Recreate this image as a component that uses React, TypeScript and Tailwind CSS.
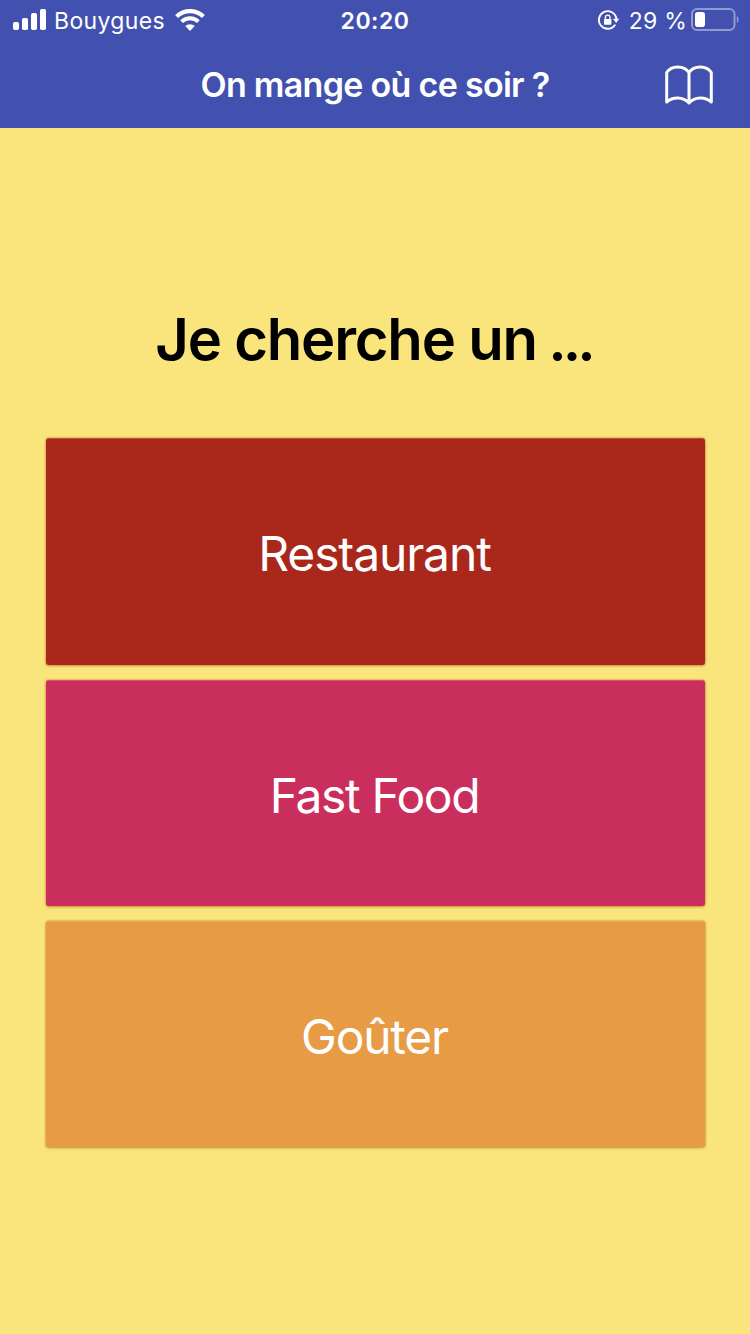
const CHOICES = [
  { id: "restaurant", label: "Restaurant", style: "bg-[#a9271b] tracking-[-1.15px]" },
  { id: "fast-food", label: "Fast Food", style: "bg-[#ca2e5d] tracking-[-1.4px]" },
  { id: "gouter", label: "Goûter", style: "bg-[#e89b45] tracking-[-1.25px]" },
];

const SignalIcon = () => (
  <svg className="mb-[2px] ml-[13px]" width="33" height="21" viewBox="0 0 33 21" fill="#fff">
    <rect x="0" y="13" width="6" height="8" rx="1.8" />
    <rect x="9" y="9" width="6" height="12" rx="1.8" />
    <rect x="18" y="4" width="6" height="17" rx="1.8" />
    <rect x="27" y="0" width="6" height="21" rx="1.8" />
  </svg>
);

const WifiIcon = () => (
  <svg width="30" height="22" viewBox="0 0 30 22" fill="none" stroke="#fff">
    <path d="M1.6 7.6 A19 19 0 0 1 28.4 7.6" strokeWidth="4.2" />
    <path d="M6.6 12.7 A12 12 0 0 1 23.4 12.7" strokeWidth="3.8" />
    <path d="M15 22 L10.2 17.1 A7 7 0 0 1 19.8 17.1 Z" fill="#fff" stroke="none" />
  </svg>
);

const RotationLockIcon = () => (
  <svg width="22" height="20" viewBox="0 0 22 20" fill="none">
    <path
      d="M16.8 15.2 A8.8 8.8 0 1 1 18.4 8.6"
      stroke="#fff"
      strokeWidth="1.9"
      strokeLinecap="round"
    />
    <path d="M15 8.8 H21.3 L18.1 13 Z" fill="#fff" />
    <rect x="6" y="9" width="7.4" height="5.8" rx="0.8" fill="#fff" />
    <path d="M7.4 9.5 V7.5 A2.3 2.3 0 0 1 12 7.5 V9.5" stroke="#fff" strokeWidth="1.3" />
  </svg>
);

const BatteryIcon = () => (
  <svg width="48" height="24" viewBox="0 0 48 24" fill="none">
    <rect x="1" y="1" width="42.5" height="21" rx="5" stroke="#fff" strokeOpacity="0.42" strokeWidth="2" />
    <path d="M45.8 8 C48.2 9 48.2 14 45.8 15 Z" fill="#fff" fillOpacity="0.42" />
    <rect x="4" y="4" width="10" height="15" rx="2.8" fill="#fff" />
  </svg>
);

const BookIcon = () => (
  <svg
    width="48"
    height="40"
    viewBox="0 0 48 40"
    fill="none"
    stroke="#fff"
    strokeWidth="3"
    strokeLinecap="round"
    strokeLinejoin="round"
  >
    <path d="M24 7.5 C19 0 6.5 0 1.7 7.5 V37 C8 31.5 18 31.5 24 38 C30 31.5 40 31.5 46.3 37 V7.5 C41.5 0 29 0 24 7.5 V38" />
  </svg>
);

const StatusBar = () => (
  <div className="grid h-10 grid-cols-[1fr_auto_1fr] items-center text-[23px] leading-[38px]">
    <div className="flex items-center">
      <SignalIcon />
      <span className="mt-[2px] ml-[8px] tracking-[0.35px]">Bouygues</span>
      <span className="mb-px ml-[10px] flex">
        <WifiIcon />
      </span>
    </div>
    <span className="mt-[2px] font-semibold tracking-[0.5px]">20:20</span>
    <div className="flex items-center justify-end">
      <RotationLockIcon />
      <span className="mt-[2px] ml-[9px] tracking-[0.2px]">29 %</span>
      <span className="ml-[4px] mr-[11px] flex">
        <BatteryIcon />
      </span>
    </div>
  </div>
);

const Header = () => (
  <header className="h-32 bg-[#4251af] text-white">
    <StatusBar />
    <div className="grid h-[88px] grid-cols-[1fr_auto_1fr] items-center">
      <h1 className="col-start-2 text-[34px] font-semibold tracking-[-0.7px]">
        On mange où ce soir ?
      </h1>
      <button className="mt-[2px] mr-[37px] justify-self-end" aria-label="Carnet">
        <BookIcon />
      </button>
    </div>
  </header>
);

export default function App() {
  return (
    <div className="flex h-[1334px] w-[750px] flex-col bg-[#fae47c] font-['Inter',sans-serif]">
      <Header />
      <main className="flex flex-col px-[46px] pt-[175px]">
        <h2 className="pr-[3px] text-center text-[58px] leading-[72px] font-semibold tracking-[-1.2px] text-black">
          Je cherche un <span className="-ml-[2px] tracking-[-4px]">...</span>
        </h2>
        <div className="mt-[63px] flex flex-col gap-[15px]">
          {CHOICES.map(({ id, label, style }) => (
            <button
              key={id}
              className={`h-[226.5px] w-[659px] rounded-[3px] pt-[6px] pr-[2px] text-[48px] text-white shadow-[inset_0_1px_0_rgba(250,200,100,0.25),0_0_2px_rgba(150,60,10,0.6),0_1px_3px_rgba(150,80,10,0.4)] last:h-[226px] ${style}`}
            >
              {label}
            </button>
          ))}
        </div>
      </main>
    </div>
  );
}
